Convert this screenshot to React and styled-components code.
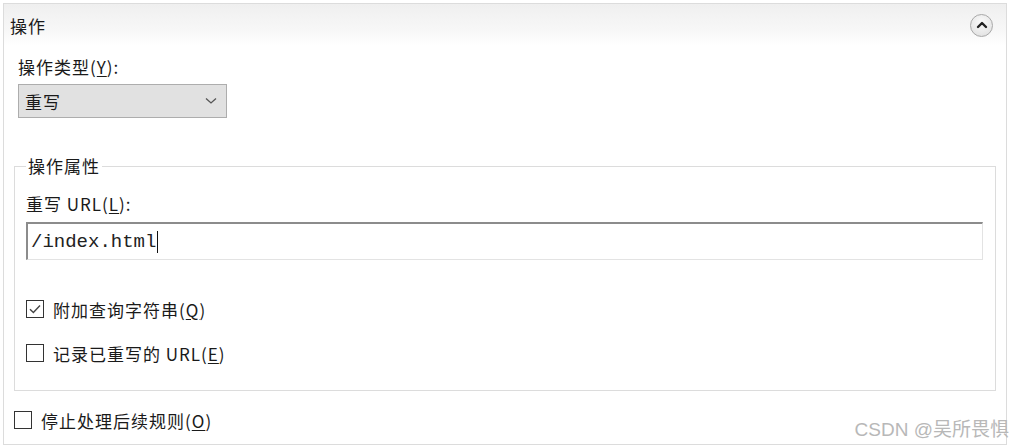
import styled, { createGlobalStyle } from 'styled-components';

const GlobalStyle = createGlobalStyle`
  html, body {
    margin: 0;
    padding: 0;
    background: #ffffff;
  }
  body {
    font-family: "Noto Sans CJK SC", "Noto Sans", sans-serif;
    color: #1a1a1a;
  }
`;

const Panel = styled.div`
  position: relative;
  box-sizing: border-box;
  width: 1004px;
  height: 442px;
  margin: 3px;
  border: 1px solid #dcdcdc;
  background: #ffffff;
`;

const Header = styled.div`
  display: flex;
  align-items: center;
  justify-content: space-between;
  height: 42px;
  padding: 0 13px 0 6px;
  background: linear-gradient(to bottom, #efefef 0%, #f7f7f7 60%, #ffffff 100%);
  font-size: 17px;
  letter-spacing: 1px;
`;

const CollapseButton = styled.button`
  display: flex;
  align-items: center;
  justify-content: center;
  width: 23px;
  height: 23px;
  padding: 0;
  border-radius: 50%;
  border: 1px solid #a9a9a9;
  background: radial-gradient(circle at 50% 35%, #fbfbfb 0%, #e6e6e6 70%, #d8d8d8 100%);
`;

const Content = styled.div`
  padding: 11px 10px 0;
`;

const TypeSection = styled.div`
  padding-left: 4px;
`;

const Label = styled.div`
  font-size: 17px;
  line-height: 20px;
  letter-spacing: 1px;
  white-space: nowrap;
`;

const Key = styled.span`
  text-decoration: underline;
  text-underline-offset: 2px;
`;

const Select = styled.div`
  box-sizing: border-box;
  display: flex;
  align-items: center;
  justify-content: space-between;
  width: 209px;
  height: 34px;
  margin-top: 7px;
  padding: 0 9px 0 6px;
  border: 1px solid #adadad;
  background: #e1e1e1;
  font-size: 17px;
  letter-spacing: 1px;
`;

const GroupBox = styled.fieldset`
  margin: 38px 0 0;
  padding: 0 12px 27px 11px;
  border: 1px solid #dcdcdc;
  min-width: 0;
`;

const Legend = styled.legend`
  padding: 0 2px;
  font-size: 17px;
  line-height: 20px;
  letter-spacing: 1px;
`;

const FieldLabel = styled(Label)`
  margin-top: 18px;
`;

const UrlInput = styled.div`
  box-sizing: border-box;
  display: flex;
  align-items: center;
  height: 38px;
  margin-top: 8px;
  padding-left: 3px;
  border-style: solid;
  border-width: 2px 1px 1px 2px;
  border-color: #8c8c8c #e3e3e3 #e3e3e3 #8c8c8c;
  font-family: "Liberation Mono", monospace;
  font-size: 19px;
  color: #222;
`;

const Caret = styled.span`
  display: inline-block;
  width: 1px;
  height: 22px;
  background: #111;
  margin-left: 1px;
`;

const CheckRow = styled.div`
  display: flex;
  align-items: center;
  gap: 9px;
  height: 20px;
  margin-top: ${p => p.$top}px;
  font-size: 17px;
  letter-spacing: 1px;
`;

const Box = styled.span`
  box-sizing: border-box;
  display: flex;
  align-items: center;
  justify-content: center;
  width: 18px;
  height: 18px;
  border: 1px solid #333;
  background: #fff;
`;

const Watermark = styled.div`
  position: absolute;
  right: -3px;
  bottom: 3px;
  font-family: "Liberation Sans", "Noto Sans CJK SC", sans-serif;
  font-size: 19px;
  color: #b8b8b8;
  white-space: nowrap;
`;

function Checkbox({ checked, children, top }) {
  return (
    <CheckRow $top={top}>
      <Box>
        {checked && (
          <svg width="14" height="14" viewBox="0 0 14 14">
            <path d="M2 7.2 L5.4 10.6 L12 3.6" fill="none" stroke="#444" strokeWidth="1.4" />
          </svg>
        )}
      </Box>
      <span>{children}</span>
    </CheckRow>
  );
}

export default function App() {
  return (
    <>
      <GlobalStyle />
      <Panel>
        <Header>
          <span>操作</span>
          <CollapseButton>
            <svg width="12" height="10" viewBox="0 0 12 10">
              <path d="M2 7 L6 3 L10 7" fill="none" stroke="#222" strokeWidth="2.4" strokeLinecap="round" strokeLinejoin="round" />
            </svg>
          </CollapseButton>
        </Header>
        <Content>
          <TypeSection>
            <Label>操作类型(<Key>Y</Key>):</Label>
            <Select>
              <span>重写</span>
              <svg width="12" height="8" viewBox="0 0 12 8">
                <path d="M1 1.5 L6 6 L11 1.5" fill="none" stroke="#555" strokeWidth="1.3" />
              </svg>
            </Select>
          </TypeSection>
          <GroupBox>
            <Legend>操作属性</Legend>
            <FieldLabel>重写 URL(<Key>L</Key>):</FieldLabel>
            <UrlInput>
              /index.html<Caret />
            </UrlInput>
            <Checkbox checked top={39}>附加查询字符串(<Key>Q</Key>)</Checkbox>
            <Checkbox top={24}>记录已重写的 URL(<Key>E</Key>)</Checkbox>
          </GroupBox>
          <Checkbox top={19}>停止处理后续规则(<Key>O</Key>)</Checkbox>
        </Content>
        <Watermark>CSDN @吴所畏惧</Watermark>
      </Panel>
    </>
  );
}
